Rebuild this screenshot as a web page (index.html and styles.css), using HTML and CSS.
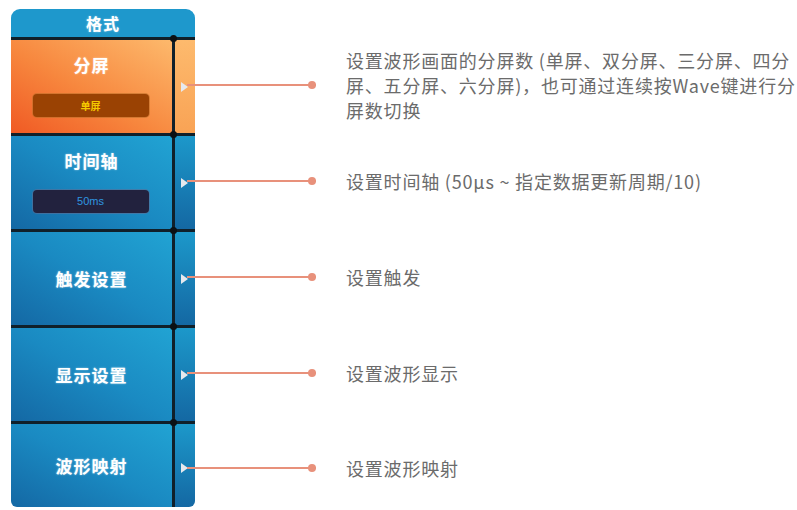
FILE: index.html
```html
<!DOCTYPE html>
<html lang="zh-CN">
<head>
    <meta charset="UTF-8">
    <meta name="viewport" content="width=device-width, initial-scale=1.0">
    <title>格式菜单说明</title>
    <link rel="stylesheet" href="styles.css">
</head>
<body>

<div class="menu">
    <div class="menu-head">格式</div>

    <div class="row">
        <div class="key key-orange">
            <div class="key-label">分屏</div>
            <div class="badge badge-orange">单屏</div>
        </div>
        <div class="tab tab-orange"><span class="arrow"></span></div>
        <div class="leader"></div>
        <p class="desc">设置波形画面的分屏数 (单屏、双分屏、三分屏、四分<br>屏、五分屏、六分屏)，也可通过连续按Wave键进行分<br>屏数切换</p>
    </div>

    <div class="row">
        <div class="key">
            <div class="key-label">时间轴</div>
            <div class="badge badge-navy">50ms</div>
        </div>
        <div class="tab"><span class="arrow"></span></div>
        <div class="leader"></div>
        <p class="desc">设置时间轴 (50µs ~ 指定数据更新周期/10)</p>
    </div>

    <div class="row">
        <div class="key key-center">
            <div class="key-label">触发设置</div>
        </div>
        <div class="tab"><span class="arrow"></span></div>
        <div class="leader"></div>
        <p class="desc">设置触发</p>
    </div>

    <div class="row">
        <div class="key key-center">
            <div class="key-label">显示设置</div>
        </div>
        <div class="tab"><span class="arrow"></span></div>
        <div class="leader"></div>
        <p class="desc">设置波形显示</p>
    </div>

    <div class="row row-last">
        <div class="key key-center">
            <div class="key-label">波形映射</div>
        </div>
        <div class="tab"><span class="arrow"></span></div>
        <div class="leader"></div>
        <p class="desc">设置波形映射</p>
    </div>
</div>

</body>
</html>
```

FILE: styles.css
```css
body {
    margin: 0;
    background-color: #ffffff;
    font-family: "Noto Sans CJK SC", "Noto Sans", sans-serif;
    overflow: hidden;
}

.menu {
    padding: 9px 0 0 11px;
}

.menu-head {
    width: 184px;
    height: 28px;
    line-height: 28px;
    background-color: #1e98cc;
    border-radius: 9px 9px 0 0;
    color: #ffffff;
    font-size: 16px;
    font-weight: bold;
    letter-spacing: 1px;
    text-align: center;
    text-shadow: 0 0 2px rgba(255, 255, 255, 0.5);
}

.row {
    display: flex;
    align-items: center;
    height: 96px;
}

.row-last {
    height: 86px;
}

.key {
    position: relative;
    box-sizing: border-box;
    align-self: stretch;
    width: 161px;
    border-top: 3px solid #10202a;
    background: linear-gradient(to top right, #1468a4, #1a8ac2 50%, #21a3d3);
    display: flex;
    flex-direction: column;
    align-items: center;
    padding-top: 13px;
}

/* junction dot where the lines cross */
.key::after {
    content: "";
    position: absolute;
    top: -5px;
    right: -5px;
    width: 7px;
    height: 7px;
    border-radius: 50%;
    background-color: #0b1014;
    z-index: 2;
}

.key-orange {
    background: linear-gradient(to top right, #f05a24, #f7873e 45%, #fdb96c);
}

.key-center {
    justify-content: center;
    padding-top: 0;
}

.key-label {
    color: #ffffff;
    font-size: 17px;
    font-weight: bold;
    letter-spacing: 1px;
    line-height: 24px;
    text-shadow: 0 0 2px rgba(255, 255, 255, 0.55);
}

.badge {
    width: 116px;
    height: 23px;
    margin-top: 17px;
    margin-left: -2px;
    border-radius: 4px;
    line-height: 23px;
    text-align: center;
    font-size: 10px;
    font-weight: bold;
}

.badge-orange {
    background-color: #9a4203;
    color: #f6c800;
    box-shadow: 0 0 0 1px rgba(190, 110, 40, 0.6);
}

.badge-navy {
    background-color: #22223e;
    color: #2f96e0;
    font-family: "Liberation Sans", Arial, sans-serif;
    font-weight: normal;
    font-size: 11px;
    box-shadow: 0 0 0 1px rgba(90, 110, 150, 0.6);
}

.tab {
    box-sizing: border-box;
    align-self: stretch;
    width: 23px;
    border-top: 3px solid #10202a;
    border-left: 3px solid #10202a;
    background: linear-gradient(to bottom, #1c98ca, #1468a3);
    display: flex;
    align-items: center;
    padding-left: 6px;
}

.tab-orange {
    background: linear-gradient(to bottom, #fdba6d, #f9a355);
}

.row-last .key {
    border-bottom-left-radius: 6px;
}

.row-last .tab {
    border-bottom-right-radius: 6px;
}

.arrow {
    width: 0;
    height: 0;
    border-top: 5px solid transparent;
    border-bottom: 5px solid transparent;
    border-left: 7px solid #e6e9ee;
}

.row-last .arrow {
    margin-top: 4px;
}

.leader {
    position: relative;
    width: 129px;
    height: 2px;
    margin-left: -8px;
    background-color: #e8917b;
}

.leader::after {
    content: "";
    position: absolute;
    right: 0;
    top: -3px;
    width: 8px;
    height: 8px;
    border-radius: 50%;
    background-color: #e8917b;
}

.row-last .leader {
    margin-top: 8px;
}

.desc {
    margin: 0 0 0 30px;
    color: #6b6b6b;
    font-size: 18px;
    letter-spacing: 0.8px;
    line-height: 25px;
    white-space: nowrap;
}

.row-last .desc {
    margin-top: 8px;
}
```
